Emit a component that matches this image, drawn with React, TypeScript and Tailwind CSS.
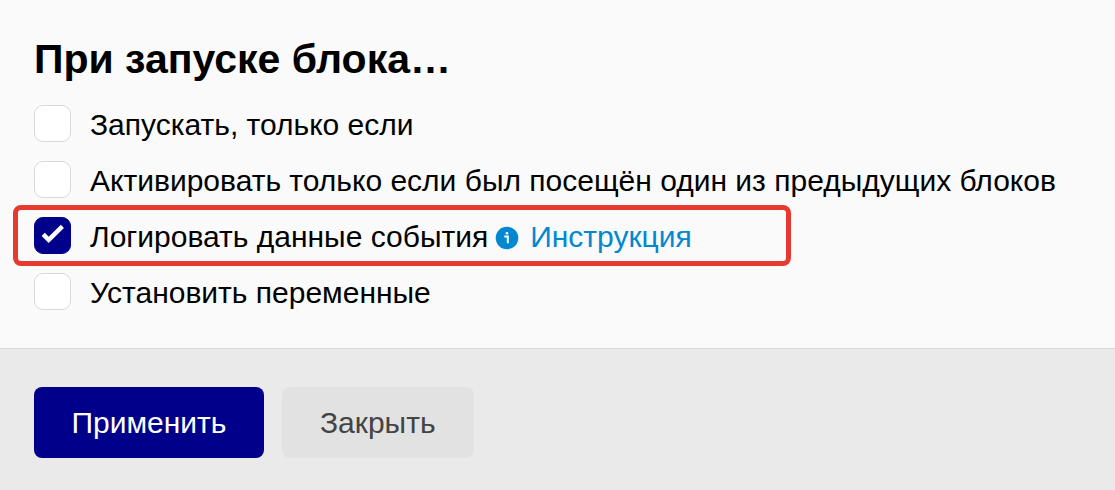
import { useState, type ReactNode } from "react";

type OptionProps = { id: string; label: string; initial?: boolean; children?: ReactNode };

function Option({ id, label, initial = false, children }: OptionProps) {
  const [checked, setChecked] = useState(initial);
  return (
    <div className="flex h-14 items-center">
      <span className="grid shrink-0">
        <input
          id={id}
          type="checkbox"
          checked={checked}
          onChange={(e) => setChecked(e.target.checked)}
          className="col-start-1 row-start-1 size-[37px] appearance-none rounded-[9px] border border-[#d9d9d9] bg-white checked:border-[#00008b] checked:bg-[#00008b]"
        />
        {checked && (
          <svg viewBox="0 0 37 37" className="pointer-events-none col-start-1 row-start-1 size-[37px]" fill="none" stroke="white" strokeWidth="4.400" aria-hidden="true">
            <path d="M9.200 17.400 14.700 22.900 28.400 9.400" />
          </svg>
        )}
      </span>
      <label htmlFor={id} className="pt-1 pl-[19px]">{label}</label>
      {children}
    </div>
  );
}

export default function App() {
  return (
    <div className="flex min-h-screen flex-col bg-[#fafafa] font-['Liberation_Sans',Arial,sans-serif] text-[30px] leading-9 text-black">
      <main className="px-[34px] pt-9 pb-[29px]">
        <h1 className="pb-3 text-[41px] leading-[47px] font-bold">При запуске блока…</h1>
        <Option id="only-if" label="Запускать, только если" />
        <Option id="visited" label="Активировать только если был посещён один из предыдущих блоков" />
        <div className="relative">
          <Option id="log" label="Логировать данные события" initial>
            <svg viewBox="0 0 24 24" className="mt-1.5 ml-[7px] size-6 shrink-0" aria-hidden="true">
              <circle cx="12" cy="12" r="11.300" fill="#0288d1" />
              <path d="M9.300 10.600h3.500v6.700" stroke="white" strokeWidth="2" fill="none" />
              <circle cx="12" cy="7.300" r="1.300" fill="white" />
            </svg>
            <a href="#instruction" className="mt-1 ml-[11px] text-[#0288d1]">Инструкция</a>
          </Option>
          <div className="pointer-events-none absolute -top-0.5 -bottom-[3px] -left-[21px] w-[778px] rounded-lg border-5 border-[#e63a30]" />
        </div>
        <Option id="vars" label="Установить переменные" />
      </main>
      <footer className="flex flex-1 items-start gap-[18px] border-t border-[#d9d9d9] bg-[#eaeaea] px-[34px] pt-[38px]">
        <button type="button" className="h-[71px] min-w-[230px] rounded-lg bg-[#00008b] px-[37px] text-white">Применить</button>
        <button type="button" className="h-[71px] rounded-lg bg-[#e2e2e2] px-[38px] text-[#444]">Закрыть</button>
      </footer>
    </div>
  );
}
